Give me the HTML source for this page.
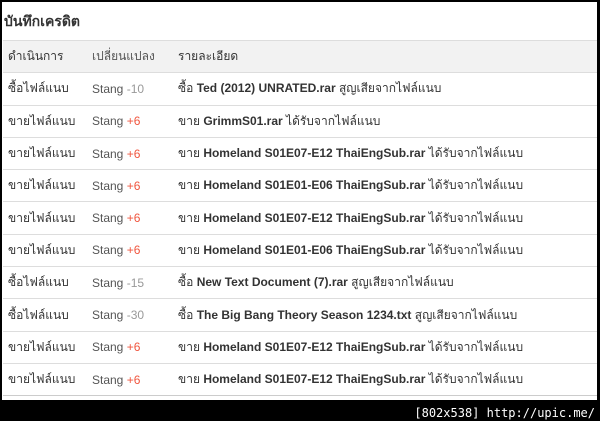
<!DOCTYPE html><html><head><meta charset="utf-8"><style>
body{margin:0;width:600px;height:421px;background:#000;position:relative;overflow:hidden;font-family:Tahoma,"Liberation Sans","DejaVu Sans",sans-serif;}
#w{position:absolute;left:2px;top:2px;width:595px;height:398px;background:#fff;}
h1{margin:0;position:absolute;left:2px;top:9px;font-size:14px;font-weight:bold;color:#333;}
table{position:absolute;left:1px;top:38px;width:594px;border-collapse:collapse;font-size:12px;color:#333;}
td{height:31.3px;border-top:1px solid #ddd;padding:0;vertical-align:middle;white-space:nowrap}
tr:last-child td{border-bottom:1px solid #ccc}
tr.h td{background:#f2f2f2;}
td.a{padding-left:5px;width:84px}td.b{width:86px;color:#555}
.g{color:#999}.r{color:#f0563f}
#f{position:absolute;right:5px;bottom:1px;color:#fff;font-family:"DejaVu Sans Mono",monospace;font-size:12px}
</style></head><body><div id="w"><h1>บันทึกเครดิต</h1>
<table>
<tr class="h"><td class="a">ดำเนินการ</td><td class="b">เปลี่ยนแปลง</td><td>รายละเอียด</td></tr>
<tr><td class="a">ซื้อไฟล์แนบ</td><td class="b">Stang <span class="g">-10</span></td><td>ซื้อ <b>Ted (2012) UNRATED.rar</b> สูญเสียจากไฟล์แนบ</td></tr>
<tr><td class="a">ขายไฟล์แนบ</td><td class="b">Stang <span class="r">+6</span></td><td>ขาย <b>GrimmS01.rar</b> ได้รับจากไฟล์แนบ</td></tr>
<tr><td class="a">ขายไฟล์แนบ</td><td class="b">Stang <span class="r">+6</span></td><td>ขาย <b>Homeland S01E07-E12 ThaiEngSub.rar</b> ได้รับจากไฟล์แนบ</td></tr>
<tr><td class="a">ขายไฟล์แนบ</td><td class="b">Stang <span class="r">+6</span></td><td>ขาย <b>Homeland S01E01-E06 ThaiEngSub.rar</b> ได้รับจากไฟล์แนบ</td></tr>
<tr><td class="a">ขายไฟล์แนบ</td><td class="b">Stang <span class="r">+6</span></td><td>ขาย <b>Homeland S01E07-E12 ThaiEngSub.rar</b> ได้รับจากไฟล์แนบ</td></tr>
<tr><td class="a">ขายไฟล์แนบ</td><td class="b">Stang <span class="r">+6</span></td><td>ขาย <b>Homeland S01E01-E06 ThaiEngSub.rar</b> ได้รับจากไฟล์แนบ</td></tr>
<tr><td class="a">ซื้อไฟล์แนบ</td><td class="b">Stang <span class="g">-15</span></td><td>ซื้อ <b>New Text Document (7).rar</b> สูญเสียจากไฟล์แนบ</td></tr>
<tr><td class="a">ซื้อไฟล์แนบ</td><td class="b">Stang <span class="g">-30</span></td><td>ซื้อ <b>The Big Bang Theory Season 1234.txt</b> สูญเสียจากไฟล์แนบ</td></tr>
<tr><td class="a">ขายไฟล์แนบ</td><td class="b">Stang <span class="r">+6</span></td><td>ขาย <b>Homeland S01E07-E12 ThaiEngSub.rar</b> ได้รับจากไฟล์แนบ</td></tr>
<tr><td class="a">ขายไฟล์แนบ</td><td class="b">Stang <span class="r">+6</span></td><td>ขาย <b>Homeland S01E07-E12 ThaiEngSub.rar</b> ได้รับจากไฟล์แนบ</td></tr>
</table></div>
<div id="f">[802x538] http://upic.me/</div>
</body></html>
